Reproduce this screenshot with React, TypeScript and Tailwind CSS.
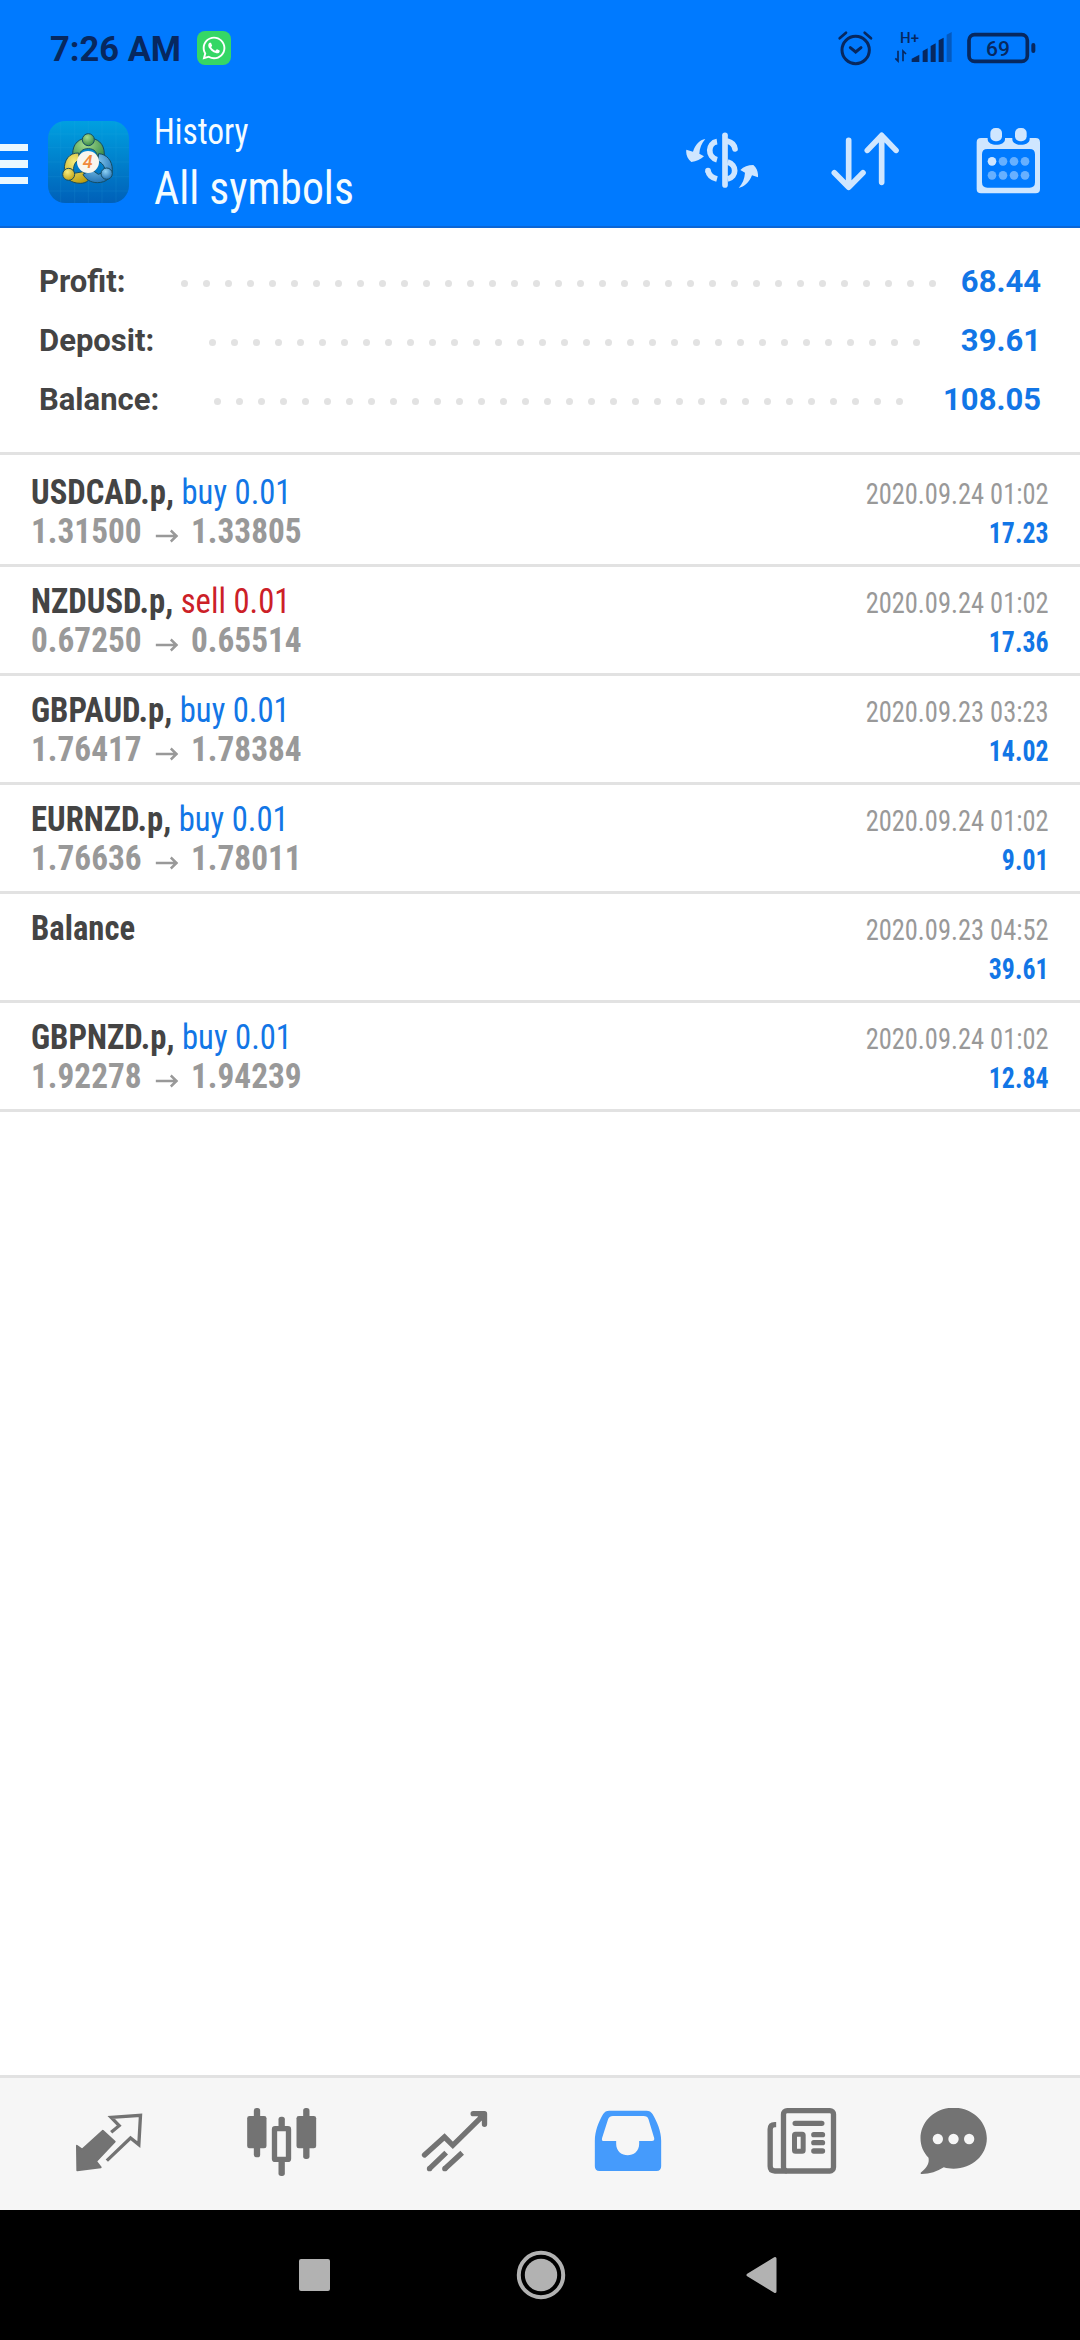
import React from 'react';
import { FaWhatsapp } from 'react-icons/fa';

interface SummaryRow {
  label: string;
  value: string;
  dots: number;
  labelWidth: string;
}

interface Deal {
  symbol: string;
  side?: 'buy' | 'sell';
  volume?: string;
  open?: string;
  close?: string;
  time: string;
  profit: string;
}

const summary: SummaryRow[] = [
  { label: 'Profit:', value: '68.44', dots: 35, labelWidth: 'w-[142px]' },
  { label: 'Deposit:', value: '39.61', dots: 33, labelWidth: 'w-[170px]' },
  { label: 'Balance:', value: '108.05', dots: 32, labelWidth: 'w-[175px]' },
];

const deals: Deal[] = [
  { symbol: 'USDCAD.p', side: 'buy', volume: '0.01', open: '1.31500', close: '1.33805', time: '2020.09.24 01:02', profit: '17.23' },
  { symbol: 'NZDUSD.p', side: 'sell', volume: '0.01', open: '0.67250', close: '0.65514', time: '2020.09.24 01:02', profit: '17.36' },
  { symbol: 'GBPAUD.p', side: 'buy', volume: '0.01', open: '1.76417', close: '1.78384', time: '2020.09.23 03:23', profit: '14.02' },
  { symbol: 'EURNZD.p', side: 'buy', volume: '0.01', open: '1.76636', close: '1.78011', time: '2020.09.24 01:02', profit: '9.01' },
  { symbol: 'Balance', time: '2020.09.23 04:52', profit: '39.61' },
  { symbol: 'GBPNZD.p', side: 'buy', volume: '0.01', open: '1.92278', close: '1.94239', time: '2020.09.24 01:02', profit: '12.84' },
];

// Barra de estado del teléfono
const StatusBar: React.FC = () => (
  <div className="flex h-[100px] items-start pl-[50px] pr-[44px] text-[#07285f]">
    <span className="mt-[29px] w-[130px] whitespace-nowrap text-[34.5px] font-bold leading-[40px]">7:26 AM</span>
    <div className="ml-[17px] mt-[31px] flex h-[34px] w-[34px] items-center justify-center rounded-[8px] bg-[#35d765]">
      <FaWhatsapp className="h-[26px] w-[26px] text-white" />
    </div>
    <div className="flex-1" />
    <svg className="mt-[30px] h-[36px] w-[36px]" viewBox="112 90 108 108" fill="none" stroke="currentColor" strokeWidth="9" strokeLinecap="round">
      <circle cx="168" cy="150" r="41" />
      <path d="M152 143l16 13 16-13" />
      <path d="M120 115l19-17M214 115l-19-17" strokeWidth="8" />
    </svg>
    <div className="ml-[21px] mt-[30px] flex h-[36px] w-[59px] flex-col">
      <svg className="h-[36px] w-[59px] shrink-0" viewBox="280 90 177 108" fill="currentColor">
        <path d="M292 152v31l-8-8M307 184v-31l9 9" fill="none" stroke="currentColor" strokeWidth="5" />
        <path d="M333 186v-10l23-12v22z" />
        <path d="M366 153l15-8v41h-15zM390 138l15-8v56h-15zM414 121l15-8v73h-15z" />
        <path d="M438 104l15-8v90h-15z" opacity="0.4" />
      </svg>
      <span className="relative -top-[36px] left-[6px] text-[15px] font-medium leading-[17px]">H+</span>
    </div>
    <div className="relative ml-[14px] mt-[32px] flex h-[32px] w-[69px] items-center">
      <svg className="h-[32px] w-[69px]" viewBox="500 96 207 96" fill="none">
        <rect x="506" y="104" width="175" height="80" rx="17" stroke="currentColor" strokeWidth="11" />
        <rect x="693" y="129" width="12" height="30" rx="6" fill="currentColor" />
      </svg>
      <span className="absolute left-[19px] top-[5px] text-[21px] font-medium leading-[24px]">69</span>
    </div>
  </div>
);

const AppLogo: React.FC = () => (
  <svg className="ml-[20px] mt-[21px] h-[82px] w-[81px] shrink-0" viewBox="144 363 243 246">
    <defs>
      <linearGradient id="tile" x1="0" y1="0" x2="0" y2="1">
        <stop offset="0" stopColor="#00a0e0" />
        <stop offset="0.5" stopColor="#0080cc" />
        <stop offset="1" stopColor="#0060b8" />
      </linearGradient>
      <radialGradient id="green" cx="0.4" cy="0.3" r="0.8">
        <stop offset="0" stopColor="#a5dc8d" />
        <stop offset="1" stopColor="#2b8040" />
      </radialGradient>
      <radialGradient id="yellow" cx="0.4" cy="0.3" r="0.8">
        <stop offset="0" stopColor="#f6ec7c" />
        <stop offset="1" stopColor="#b9990c" />
      </radialGradient>
      <radialGradient id="blue" cx="0.4" cy="0.3" r="0.8">
        <stop offset="0" stopColor="#8fd2f5" />
        <stop offset="1" stopColor="#1769ae" />
      </radialGradient>
    </defs>
    <rect x="144" y="363" width="243" height="246" rx="52" fill="url(#tile)" />
    <path d="M182 366v240M224 363v246M265 363v246M306 363v246M348 366v240M146 402h239M144 443h243M144 486h243M144 530h243M146 573h239" stroke="#35b5e6" strokeWidth="1.5" opacity="0.25" />
    <g stroke="#164c61" strokeWidth="3">
      <path d="M218 462c0-32 20-48 47-48s48 16 48 48v20h-20c1-24-9-36-28-36s-27 10-28 26z" fill="url(#green)" />
      <path d="M236 459c-29-1-44 22-43 50 1 26 20 41 48 41 10 0 18-3 24-9l-15-26-28 5c-4-20 2-34 16-42z" fill="url(#yellow)" />
      <path d="M296 461c24 1 41 22 41 47 0 23-17 40-45 40-20 0-35-10-43-25l26-14 20 14 20-8c0-14-6-26-22-32z" fill="url(#blue)" />
      <circle cx="265" cy="419" r="18" fill="url(#green)" />
      <circle cx="206" cy="523" r="18" fill="url(#yellow)" />
      <circle cx="320" cy="521" r="17" fill="url(#blue)" />
    </g>
    <circle cx="264" cy="486" r="33" fill="#f8f6ee" />
    <text x="263" y="505" textAnchor="middle" fontSize="54" fontWeight="500" fontStyle="italic" fill="#f08a3c" fontFamily="Roboto">4</text>
  </svg>
);

// Cabecera con menú, título y acciones
const AppBar: React.FC = () => (
  <div className="flex h-[128px] items-start border-b-2 border-[#0b66d6] pr-[36px]">
    <div className="mt-[43.5px] flex w-[28px] flex-col gap-[9px]">
      <div className="h-[7.5px] bg-[#eaf8ff]" />
      <div className="h-[7.5px] bg-[#eaf8ff]" />
      <div className="h-[7.5px] bg-[#eaf8ff]" />
    </div>
    <AppLogo />
    <div className="ml-[25px] mt-[9px] flex flex-1 origin-left scale-x-[0.93] flex-col whitespace-nowrap font-['Roboto_Condensed',Roboto,sans-serif] text-[#f4fcff] [font-stretch:75%]">
      <span className="text-[36px] leading-[46px]">History</span>
      <span className="mt-[4px] text-[47px] leading-[57px]">All symbols</span>
    </div>
    <div className="mt-[26px] flex gap-[71px] text-[#cfe6ff]">
      <svg className="h-[72px] w-[72px]" viewBox="78 78 216 216" fill="none" stroke="currentColor" strokeWidth="17">
        <path d="M195 106v149" strokeLinecap="round" />
        <path d="M171 125c-28 4-30 46 0 54" />
        <path d="M203 124c12 3 20 10 22 23" strokeLinecap="round" />
        <path d="M203 186c28 8 28 44 0 51" />
        <path d="M144 212c2 12 12 21 27 25" />
        <circle cx="144" cy="212" r="8.5" fill="currentColor" stroke="none" />
        <g fill="currentColor" stroke="none">
          <path d="M136 117c-17 3-30 16-37 38l-20-6c-2 14 3 27 15 37 15-1 29-8 38-17l-14-8c1-17 7-32 18-44z" />
          <path d="M236 264c17-3 32-17 40-38l18 6c1-15-3-27-14-37-16 0-29 5-39 15l14 8c-1 18-8 34-19 46z" />
        </g>
      </svg>
      <svg className="h-[72px] w-[72px]" viewBox="507 78 216 216" fill="none" stroke="currentColor" strokeWidth="17" strokeLinecap="round" strokeLinejoin="round">
        <path d="M566 121v139M523 218l43 44 43-44" />
        <path d="M665 247V107M622 151l43-45 43 45" />
      </svg>
      <svg className="h-[72px] w-[72px]" viewBox="936 78 216 216" fill="currentColor">
        <path fillRule="evenodd" d="M963 114h20v4c0 22 52 22 52 0v-4h22v4c0 22 52 22 52 0v-4h18q13 0 13 13v140q0 13-13 13H963q-13 0-13-13V127q0-13 13-13zM982 147q-16 0-16 16v84q0 16 16 16h127q16 0 16-16v-84q0-16-16-16z" />
        <rect x="991" y="84" width="35" height="40" rx="15" />
        <rect x="1065" y="84" width="35" height="40" rx="15" />
        <circle cx="996" cy="184" r="13" />
        <g fill="#67b0ff">
          <circle cx="1029" cy="184" r="13" />
          <circle cx="1062" cy="184" r="13" />
          <circle cx="1095" cy="184" r="13" />
          <circle cx="996" cy="226" r="13" />
          <circle cx="1029" cy="226" r="13" />
          <circle cx="1062" cy="226" r="13" />
          <circle cx="1095" cy="226" r="13" />
        </g>
      </svg>
    </div>
  </div>
);

const Summary: React.FC = () => (
  <div className="h-[227px] border-b-[3px] border-[#e2e2e2] pl-[39px] pr-[39px] pt-[24px]">
    {summary.map((row) => (
      <div key={row.label} className="flex h-[59px] items-center text-[31px] font-bold">
        <span className={`${row.labelWidth} pt-[2px] text-[#444444]`}>{row.label}</span>
        <div className="mt-[4px] flex gap-[15px]">
          {Array.from({ length: row.dots }, (_, i) => (
            <div key={i} className="h-[7px] w-[7px] rounded-full bg-[#e2e2e2]" />
          ))}
        </div>
        <span className="ml-auto pt-[2px] text-[#1276e6]">{row.value}</span>
      </div>
    ))}
  </div>
);

const DealRow: React.FC<{ deal: Deal }> = ({ deal }) => (
  <div className="flex h-[109px] justify-between whitespace-nowrap border-b-[3px] border-[#e2e2e2] px-[31px] font-['Roboto_Condensed',Roboto,sans-serif] leading-[39px] [font-stretch:75%]">
    <div className="pt-[15px] text-[35px]">
      <div className="origin-left scale-x-[0.933]">
        <span className="font-bold text-[#444444]">{deal.side ? `${deal.symbol}, ` : deal.symbol}</span>
        {deal.side && (
          <span className={deal.side === 'buy' ? 'text-[#1276e6]' : 'text-[#cc2027]'}>
            {deal.side} {deal.volume}
          </span>
        )}
      </div>
      {deal.open && (
        <div className="flex origin-left scale-x-[0.951] font-bold text-[#999999]">
          <span>{deal.open}</span>
          <svg className="ml-[15px] mr-[13px] mt-[17px] h-[14px] w-[24px]" viewBox="0 0 24 14" fill="none" stroke="currentColor" strokeWidth="2.6">
            <path d="M0 7h22M16 1.5l6 5.5-6 5.5" />
          </svg>
          <span>{deal.close}</span>
        </div>
      )}
    </div>
    <div className="pt-[17px] text-right text-[29px]">
      <div className="origin-right scale-x-[0.912] text-[#999999]">{deal.time}</div>
      <div className="origin-right scale-x-[0.89] font-bold text-[#1276e6]">{deal.profit}</div>
    </div>
  </div>
);

// Navegación inferior de la aplicación
const BottomNav: React.FC = () => (
  <div className="flex h-[135px] items-center border-t-[3px] border-[#e2e2e2] bg-[#f6f6f6] pl-[22px] text-[#737373]">
    <div className="flex w-[173px] justify-center">
      <svg className="h-[72px] w-[72px]" viewBox="97.5 144 216 216" fill="currentColor" stroke="currentColor">
        <path d="M187 212l36 33-56 59 14 18-71 9-1-74 16 11z" strokeWidth="5" strokeLinejoin="round" />
        <path d="M212 217l24-20-24-25 88-6-5 88-25-20-71 68" fill="none" strokeWidth="10" />
      </svg>
    </div>
    <div className="flex w-[173px] justify-center">
      <svg className="h-[72px] w-[72px]" viewBox="616.5 144 216 216" fill="currentColor">
        <rect x="640" y="144" width="19" height="148" rx="8" />
        <rect x="620" y="168" width="58" height="97" rx="7" />
        <rect x="788" y="144" width="19" height="153" rx="8" />
        <rect x="768" y="168" width="59" height="97" rx="7" />
        <rect x="714" y="170" width="19" height="38" rx="8" />
        <rect x="714" y="296" width="19" height="52" rx="8" />
        <rect x="702" y="206" width="42" height="92" rx="2" fill="none" stroke="currentColor" strokeWidth="16" />
      </svg>
    </div>
    <div className="flex w-[173px] justify-center">
      <svg className="h-[72px] w-[72px]" viewBox="115.5 144 216 216" fill="none" stroke="currentColor" strokeWidth="16">
        <path d="M132 285l60-54 25 25 91-90" strokeLinecap="round" />
        <path d="M278 161h34v32" strokeLinecap="round" strokeLinejoin="round" />
        <path d="M290 164h20v22z" fill="currentColor" strokeWidth="4" />
        <path d="M147 326l50-48M193 326l52-48" />
        <circle cx="147" cy="326" r="8" fill="currentColor" stroke="none" />
        <circle cx="193" cy="326" r="8" fill="currentColor" stroke="none" />
      </svg>
    </div>
    <div className="flex w-[173px] justify-center text-[#459bfc]">
      <svg className="h-[72px] w-[72px]" viewBox="634.5 144 216 216" fill="currentColor">
        <path fillRule="evenodd" d="M686 152h112q12 0 18 10c14 24 26 52 26 80v77q0 14-14 14H657q-14 0-14-14v-77c0-28 11-56 25-80q6-10 18-10zM697 168q-10 0-14 9l-18 56q-3 10 5 10h37v8c0 46 69 46 69 0v-8h38q9 0 7-9l-17-56q-3-10-15-10z" />
      </svg>
    </div>
    <div className="flex w-[173px] justify-center">
      <svg className="h-[72px] w-[72px]" viewBox="73.5 144 216 216" fill="none" stroke="currentColor">
        <rect x="129" y="152" width="150" height="181" rx="11" strokeWidth="16" />
        <path d="M107 194h-4q-14 0-14 14v111q0 14 14 14h36" strokeWidth="16" />
        <path d="M164 190h80M220 224h26M220 248h26M220 273h26" strokeWidth="16" strokeLinecap="round" />
        <rect x="162" y="223" width="26" height="51" rx="3" strokeWidth="15" />
      </svg>
    </div>
    <div className="flex w-[133px] justify-center">
      <svg className="h-[72px] w-[72px]" viewBox="532.5 144 216 216">
        <path fill="currentColor" d="M639 143c56 0 100 41 100 92s-44 91-100 91c-11 0-20-1-29-4-20 13-42 20-66 20-4 0-5-3-2-5 18-14 25-28 22-44-15-15-24-35-24-58 0-51 44-92 99-92z" />
        <circle cx="592" cy="237" r="15.5" fill="#f6f6f6" />
        <circle cx="639" cy="237" r="15.5" fill="#f6f6f6" />
        <circle cx="686" cy="237" r="15.5" fill="#f6f6f6" />
      </svg>
    </div>
  </div>
);

const SystemNav: React.FC = () => (
  <div className="flex h-[130px] items-center justify-between bg-black pl-[299px] pr-[303px] text-[#b2b2b2]">
    <div className="h-[32px] w-[31px] rounded-[2px] bg-[#b2b2b2]" />
    <svg className="ml-[5px] h-[50px] w-[50px]" viewBox="0 0 50 50">
      <circle cx="25" cy="25" r="22.2" fill="none" stroke="currentColor" strokeWidth="4" />
      <circle cx="25" cy="25" r="16.2" fill="currentColor" />
    </svg>
    <svg className="h-[38px] w-[31px]" viewBox="0 0 31 38">
      <path d="M2 19L29 2.5v33z" fill="currentColor" stroke="currentColor" strokeWidth="3" strokeLinejoin="round" />
    </svg>
  </div>
);

export default function App() {
  return (
    <div className="flex h-[2340px] w-[1080px] flex-col overflow-hidden bg-white font-[Roboto,sans-serif]">
      <header className="bg-[#007aff]">
        <StatusBar />
        <AppBar />
      </header>
      <Summary />
      <main className="flex-1 pt-[3px]">
        {deals.map((deal, index) => (
          <DealRow key={index} deal={deal} />
        ))}
      </main>
      <BottomNav />
      <SystemNav />
    </div>
  );
}
